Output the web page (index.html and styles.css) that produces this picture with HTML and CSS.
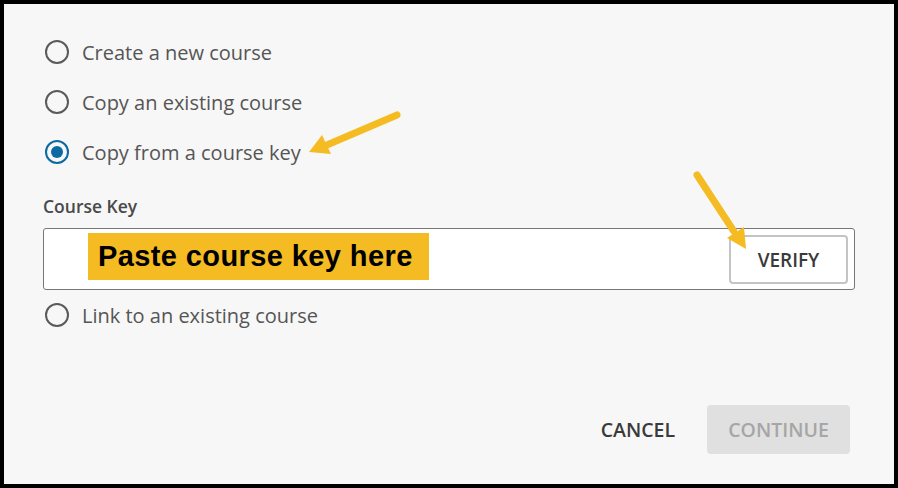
FILE: index.html
```html
<!DOCTYPE html>
<html>
<head>
<meta charset="utf-8">
<link rel="stylesheet" href="styles.css">
</head>
<body>
<div class="frame">
  <div class="options">
    <label class="radio-row"><span class="radio"></span><span class="radio-text">Create a new course</span></label>
    <label class="radio-row"><span class="radio"></span><span class="radio-text">Copy an existing course</span></label>
    <label class="radio-row"><span class="radio checked"></span><span class="radio-text">Copy from a course key</span></label>
  </div>
  <div class="key-section">
    <div class="key-label">Course Key</div>
    <div class="key-input">
      <div class="highlight">Paste course key here</div>
      <button class="verify">VERIFY</button>
    </div>
  </div>
  <label class="radio-row link-row"><span class="radio"></span><span class="radio-text">Link to an existing course</span></label>
  <div class="footer">
    <button class="cancel">CANCEL</button>
    <button class="continue">CONTINUE</button>
  </div>
  <svg class="arrows" width="898" height="488" viewBox="0 0 898 488">
    <g stroke="#f4bc22" stroke-width="7" stroke-linecap="round" fill="#f4bc22">
      <line x1="397" y1="115" x2="328" y2="144.5"/>
      <line x1="697" y1="175" x2="734" y2="231.5"/>
    </g>
    <g fill="#f4bc22">
      <polygon points="309,152 331,154 322,135"/>
      <polygon points="746,249 727,238 744,227"/>
    </g>
  </svg>
</div>
</body>
</html>
```

FILE: styles.css
```css
* { box-sizing: border-box; }
html, body { margin: 0; padding: 0; }
body { width: 898px; height: 488px; overflow: hidden; font-family: "Open Sans", "Noto Sans", sans-serif; }
.frame {
  position: relative;
  width: 898px;
  height: 488px;
  border: 4px solid #000;
  background: #f7f7f7;
  padding: 33px 39px 0 39px;
  display: flex;
  flex-direction: column;
}
.options { display: flex; flex-direction: column; gap: 20px; }
.radio-row {
  display: flex;
  align-items: center;
  height: 30px;
  gap: 13px;
  padding-left: 2px;
}
.radio {
  width: 24px;
  height: 24px;
  border-radius: 50%;
  border: 2.5px solid #5a5a5a;
  display: flex;
  align-items: center;
  justify-content: center;
  flex: none;
}
.radio.checked { border-color: #0a6aa1; }
.radio.checked::after {
  content: "";
  width: 12px;
  height: 12px;
  border-radius: 50%;
  background: #0a6aa1;
}
.radio-text { font-size: 20px; color: #555; }
.key-section { margin-top: 29px; }
.key-label { font-size: 17.5px; font-weight: 600; color: #4a4a4a; line-height: 20px; }
.key-input {
  margin-top: 12px;
  height: 62px;
  background: #fff;
  border: 1px solid #777;
  border-radius: 3px;
  display: flex;
  align-items: center;
  justify-content: space-between;
  padding: 0 6px 0 44px;
}
.highlight {
  background: #f4bc22;
  width: 341px;
  height: 47px;
  margin-top: -5px;
  display: flex;
  align-items: center;
  padding-left: 10px;
  font-family: "Liberation Sans", Arial, sans-serif;
  font-weight: bold;
  font-size: 29px;
  letter-spacing: 0.4px;
  color: #000;
}
.verify {
  width: 119px;
  height: 49px;
  border: 2px solid #c4c4c4;
  border-radius: 4px;
  background: #fff;
  font-family: "Open Sans", sans-serif;
  font-weight: 600;
  font-size: 19px;
  color: #3a3a3a;
  margin-top: 1px;
}
.link-row { margin-top: 10px; }
.footer {
  margin-top: auto;
  margin-bottom: 30px;
  margin-right: 5px;
  display: flex;
  justify-content: flex-end;
  align-items: center;
  gap: 30px;
}
.cancel, .continue {
  font-family: "Open Sans", sans-serif;
  font-weight: 600;
  font-size: 19.5px;
  border: none;
  border-radius: 4px;
  height: 49px;
}
.cancel { background: transparent; color: #3a3a3a; padding: 0 2px; }
.continue { background: #e0e0e0; color: #a6a6a6; width: 143px; }
.arrows { position: absolute; left: -4px; top: -4px; pointer-events: none; }
```
